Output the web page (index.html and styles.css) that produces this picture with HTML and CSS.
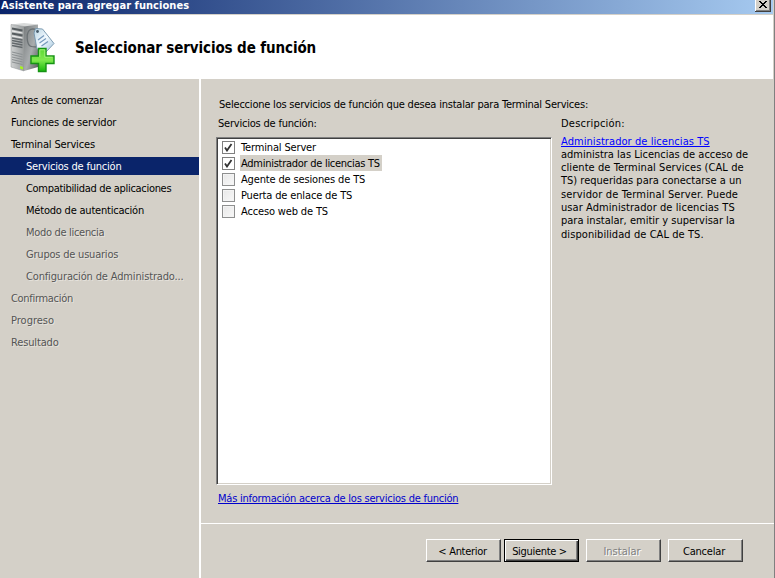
FILE: index.html
```
<!DOCTYPE html>
<html lang="es">
<head>
<meta charset="utf-8">
<title>Asistente para agregar funciones</title>
<link rel="stylesheet" href="styles.css">
</head>
<body>
<div class="window">
  <div class="titlebar">
    <span class="caption">Asistente para agregar funciones</span>
    <span class="close"><svg width="8" height="7" viewBox="0 0 8 7" shape-rendering="crispEdges"><path d="M0 0h2v1h1v1h2V1h1V0h2v1H7v1H6v1H5v1h1v1h1v1h1v1H6V6H5V5H3v1H2v1H0V6h1V5h1V4h1V3H2V2H1V1H0z"/></svg></span>
  </div>
  <header class="header">
    <svg class="logo" width="46" height="50" viewBox="0 0 46 50">
      <defs>
        <linearGradient id="front" x1="0" x2="1"><stop offset="0" stop-color="#cfd1d1"/><stop offset="1" stop-color="#989c9d"/></linearGradient>
        <linearGradient id="side" x1="0" y1="0" x2="1" y2="1"><stop offset="0" stop-color="#777b7d"/><stop offset=".55" stop-color="#a9adae"/><stop offset="1" stop-color="#55595b"/></linearGradient>
        <linearGradient id="tag" x1="0" y1="0" x2="1" y2="1"><stop offset="0" stop-color="#b9d4e3"/><stop offset=".5" stop-color="#f3faff"/><stop offset="1" stop-color="#9fc2da"/></linearGradient>
        <linearGradient id="plus" x1="0" y1="0" x2="0" y2="1"><stop offset="0" stop-color="#5bd733"/><stop offset=".5" stop-color="#7fe94e"/><stop offset="1" stop-color="#18b80b"/></linearGradient>
      </defs>
      <path d="M1 1.500 14 0l14 1.500L14 4z" fill="#d8dada"/>
      <path d="M1 1.500 14 3.500V48L1 44z" fill="url(#front)" stroke="#919596" stroke-width=".5"/>
      <path d="M14 3.500 28 1.500V44L14 48z" fill="url(#side)"/>
      <path d="M2 5.500 12.500 7.500M2 10.500 12.500 12.500" stroke="#555b5e" stroke-width="1.800"/>
      <path d="M2 8 12.500 10M2 13 12.500 15" stroke="#eee" stroke-width="1"/>
      <path d="M2 15 12.500 17M2 17.500 12.500 19.500M2 20 12.500 22M2 22.500 12.500 24.500" stroke="#63696c" stroke-width="1.300"/>
      <path d="M2 29 12.500 31.500M2 31.500 12.500 34M2 34 12.500 36.500M2 36.500 12.500 39M2 39 12.500 41.500" stroke="#8b9092" stroke-width="1"/>
      <path d="M10 43 13 44V46.500L10 45.500z" fill="#a6f51d"/>
      <path d="M27 7C20 4 16 8 17.500 18c1 6 4 6 9 6" fill="none" stroke="#6a7073" stroke-width="1.300"/>
      <path d="M24 10 25.500 5.500 32.500 6 44 20.500 36 29 27 26z" fill="url(#tag)" stroke="#7393aa" stroke-width=".9"/>
      <circle cx="27.500" cy="8.500" r="1.400" fill="#465a69"/>
      <path d="M28 17 34 12.500M29.500 20 36 15.500M31.500 23 38 18.500" stroke="#7598bb" stroke-width="1.200"/>
      <path d="M28.500 25.500H36V33H44V40.500H36V48.500H28.500V40.500H21V33H28.500z" fill="url(#plus)" stroke="#169314" stroke-width="1.400"/>
      <path d="M29.800 34V26.800H34.800V34.200H42.500" fill="none" stroke="#a5f37e" stroke-width=".9"/>
    </svg>
    <h1 class="heading">Seleccionar servicios de función</h1>
  </header>
  <div class="body">
    <nav class="steps">
      <div class="step">Antes de comenzar</div>
      <div class="step snug">Funciones de servidor</div>
      <div class="step snug">Terminal Services</div>
      <div class="step sub current">Servicios de función</div>
      <div class="step sub tight">Compatibilidad de aplicaciones</div>
      <div class="step sub">Método de autenticación</div>
      <div class="step sub pending tight">Modo de licencia</div>
      <div class="step sub pending">Grupos de usuarios</div>
      <div class="step sub pending snug">Configuración de Administrado...</div>
      <div class="step pending tight">Confirmación</div>
      <div class="step pending loose">Progreso</div>
      <div class="step pending snug">Resultado</div>
    </nav>
    <div class="right">
      <main class="content">
        <p class="intro">Seleccione los servicios de función que desea instalar para Terminal Services:</p>
        <div class="columns">
          <section class="roles">
            <div class="label">Servicios de función:</div>
            <div class="list">
              <div class="item"><span class="box"><svg width="9" height="9" viewBox="0 0 9 9"><path d="M1 4.500 3 7.500 7.500 1" fill="none" stroke="#333" stroke-width="1.800"/></svg></span><span class="name snug">Terminal Server</span></div>
              <div class="item"><span class="box"><svg width="9" height="9" viewBox="0 0 9 9"><path d="M1 4.500 3 7.500 7.500 1" fill="none" stroke="#333" stroke-width="1.800"/></svg></span><span class="name selected">Administrador de licencias TS</span></div>
              <div class="item"><span class="box empty"></span><span class="name snug">Agente de sesiones de TS</span></div>
              <div class="item"><span class="box empty"></span><span class="name snug">Puerta de enlace de TS</span></div>
              <div class="item"><span class="box empty"></span><span class="name snug">Acceso web de TS</span></div>
            </div>
            <a class="more">Más información acerca de los servicios de función</a>
          </section>
          <aside class="info">
            <div class="label">Descripción:</div>
            <p class="description"><a>Administrador de licencias TS</a><br><span class="loose">administra las Licencias de acceso de</span><br>cliente de Terminal Services (CAL de<br><span class="loose">TS) requeridas para conectarse a un</span><br><span class="wide">servidor de Terminal Server. Puede</span><br>usar Administrador de licencias TS<br><span class="loose">para instalar, emitir y supervisar la</span><br>disponibilidad de CAL de TS.</p>
          </aside>
        </div>
      </main>
      <footer class="footer">
        <button class="btn back tight">&lt; Anterior</button>
        <button class="btn default tight">Siguiente &gt;</button>
        <button class="btn install" disabled>Instalar</button>
        <button class="btn cancel">Cancelar</button>
      </footer>
    </div>
  </div>
</div>
</body>
</html>
```
FILE: styles.css
```
* { box-sizing: border-box; }
body {
  margin: 0;
  background: #d4d0c8;
  color: #000;
  font: 11px/16px "DejaVu Sans Condensed", "DejaVu Sans", sans-serif;
  letter-spacing: -.21px;
  overflow: hidden;
}
h1, p { margin: 0; }
.window {
  width: 775px;
  height: 578px;
  display: flex;
  flex-direction: column;
  border-right: 1px solid #808080;
}
.titlebar {
  height: 14px;
  flex: none;
  margin-right: 1px;
  display: flex;
  justify-content: space-between;
  background: linear-gradient(90deg, #0a246a, #a6caf0);
}
.caption {
  color: #fff;
  font-weight: bold;
  line-height: 11px;
  padding-left: 1px;
  letter-spacing: .05px;
}
.close {
  width: 16px;
  height: 12px;
  margin-right: 2px;
  background: #d4d0c8;
  border: solid #404040;
  border-width: 0 1px 1px 0;
  box-shadow: inset 1px 0 #fff, inset -1px -1px #808080;
  padding: 1px 0 0 4px;
  line-height: 0;
}
.header {
  height: 65px;
  flex: none;
  margin-right: 1px;
  border-top: 1px solid #d4d0c8;
  background: #fff;
  display: flex;
}
.logo { margin: 8px 0 0 10px; }
.heading {
  margin: 23px 0 0 19px;
  font-size: 15px;
  line-height: 20px;
  letter-spacing: -.11px;
}
.body { flex: 1; display: flex; min-height: 0; }
.steps {
  width: 201px;
  padding-top: 12px;
  border-right: 2px solid #fff;
}
.step { height: 18px; line-height: 19px; margin-bottom: 4px; padding-left: 11px; white-space: nowrap; }
.sub { padding-left: 26px; }
.current { background: #0a246a; color: #fff; }
.pending { color: #555; text-shadow: 1px 1px #e6e3dd; }
.snug { letter-spacing: -.15px; }
.tight { letter-spacing: -.31px; }
.loose { letter-spacing: 0; }
.right { flex: 1; display: flex; flex-direction: column; }
.content { height: 444px; padding: 17px 0 0 17px; }
.intro { padding-left: 1px; line-height: 17px; }
.columns { display: flex; }
.roles { width: 336px; margin-right: 9px; margin-left: -2px; }
.label { height: 24px; line-height: 21px; padding-left: 2px; }
.list {
  height: 348px;
  background: #fff;
  border: 1px solid;
  border-color: #808080 #fff #fff #808080;
  box-shadow: inset 1px 1px #404040, inset -1px -1px #d4d0c8;
  padding: 1px 0 0 5px;
}
.item { display: flex; height: 16px; align-items: center; }
.box {
  width: 13px;
  height: 13px;
  border: 1px solid #808080;
  padding: 1px;
  line-height: 0;
  background: #fff;
}
.empty { border-color: #8e8f8f; background: linear-gradient(135deg, #e8e8e8, #f8f8f8); box-shadow: inset 0 0 0 1px #f4f4f4; }
.name { margin-left: 5px; padding: 0 2px 0 1px; height: 16px; line-height: 17px; }
.selected { background: #d4d0c8; letter-spacing: -.27px; }
a { color: #00f; text-decoration: underline; text-underline-offset: 1px; }
.more { display: block; margin: 4px 0 0 2px; line-height: 20px; color: #00c; letter-spacing: -.23px; }
.info { letter-spacing: .07px; }
.info .label { padding-left: 0; letter-spacing: .22px; }
.description { line-height: 13.3px; margin-top: -2.5px; white-space: nowrap; }
.wide { letter-spacing: .15px; }
.footer {
  height: 55px;
  border-top: 1px solid #fff;
  padding: 15px 0 0 225px;
  display: flex;
}
.btn {
  width: 75px;
  height: 23px;
  margin-right: 3px;
  padding: 1px 0 0;
  font-family: inherit;
  font-size: 11px;
  line-height: 19px;
  background: #d4d0c8;
  color: #000;
  border: 1px solid;
  border-color: #fff #404040 #404040 #fff;
  border-radius: 0;
  box-shadow: inset -1px -1px #808080;
}
.back { padding-right: 2px; }
.default {
  border-color: #000;
  box-shadow: inset 1px 1px #fff, inset -1px -1px #404040, inset -2px -2px #808080;
  margin-right: 7px;
  padding-right: 4px;
}
.install { margin-right: 7px; padding-right: 3px; color: #808080; text-shadow: 1px 1px #fff; letter-spacing: 0; }
.cancel { letter-spacing: -.2px; padding-right: 3px; }
```
